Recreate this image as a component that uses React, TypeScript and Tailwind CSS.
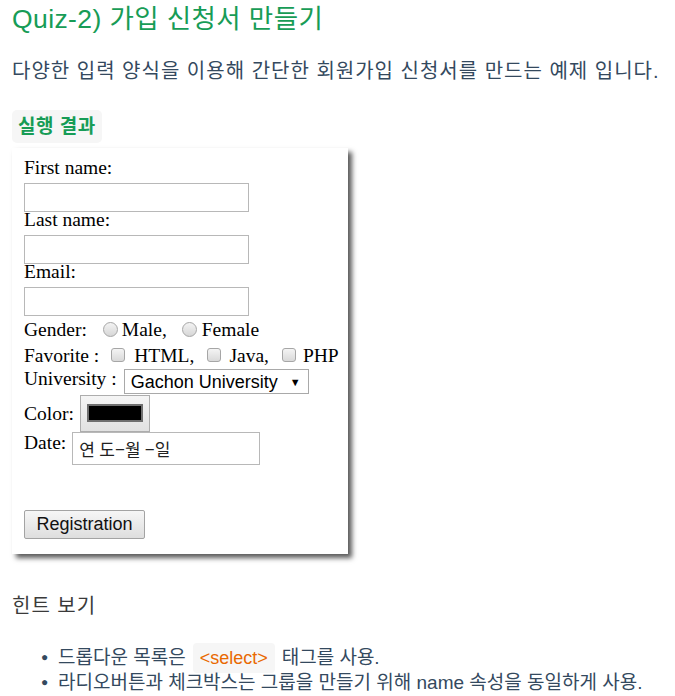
import React from "react";

const sans = { fontFamily: '"Liberation Sans", "Noto Sans CJK KR", sans-serif' };
const serif = { fontFamily: '"Liberation Serif", "Noto Sans CJK KR", serif' };

function Radio() {
  return (
    <span className="inline-block w-[15px] h-[15px] rounded-full border border-[#a6a6a6] bg-gradient-to-b from-[#f4f4f4] to-[#d6d6d6] shrink-0" />
  );
}

function Check() {
  return (
    <span className="inline-block w-[14px] h-[14px] rounded-[3px] border border-[#a6a6a6] bg-gradient-to-b from-[#f4f4f4] to-[#d9d9d9] shrink-0" />
  );
}

function TextBox() {
  return <div className="w-[225px] h-[29px] border border-[#b8b8b8] bg-white" />;
}

export default function App() {
  return (
    <div className="w-[675px] h-[696px] bg-white overflow-hidden text-[#34495e]" style={sans}>
      <div className="pl-[12px] pt-[3px]">
        <h1 className="text-[26.5px] leading-[32px] tracking-[0.4px] text-[#179c56] font-normal">Quiz-2) 가입 신청서 만들기</h1>
        <p className="mt-[22px] text-[20px] leading-[28px] tracking-[1px] whitespace-nowrap">
          다양한 입력 양식을 이용해 간단한 회원가입 신청서를 만드는 예제 입니다.
        </p>
        <div className="mt-[25px] inline-block bg-[#f6f6f6] rounded-[5px] px-[6px] h-[33px] leading-[33px] text-[19px] tracking-[0.5px] font-bold text-[#179c56]">
          실행 결과
        </div>

        <div
          className="mt-[5px] w-[336px] bg-white shadow-[4px_4px_5px_rgba(0,0,0,0.65)] pl-[12px] pt-[9px] pb-[15px] text-black text-[19.5px]"
          style={serif}
        >
          <div className="h-[26px] leading-[22px]">First name:</div>
          <TextBox />
          <div className="h-[23px] leading-[16px]">Last name:</div>
          <TextBox />
          <div className="h-[23px] leading-[16px]">Email:</div>
          <TextBox />

          <div className="h-[26px] flex items-center leading-[25px]">
            <span>Gender:</span>
            <span className="ml-[16px] flex items-center"><Radio /></span>
            <span className="ml-[4px]">Male,</span>
            <span className="ml-[15px] flex items-center"><Radio /></span>
            <span className="ml-[5px]">Female</span>
          </div>

          <div className="h-[26px] flex items-center leading-[25px]">
            <span>Favorite :</span>
            <span className="ml-[12px] flex items-center"><Check /></span>
            <span className="ml-[9px]">HTML,</span>
            <span className="ml-[13px] flex items-center"><Check /></span>
            <span className="ml-[8px]">Java,</span>
            <span className="ml-[13px] flex items-center"><Check /></span>
            <span className="ml-[7px]">PHP</span>
          </div>

          <div className="h-[26px] flex items-start leading-[22px]">
            <span>University :</span>
            <div
              className="ml-[7px] mt-[1px] w-[185px] h-[25px] border border-[#a9a9a9] bg-white flex items-center justify-between pl-[6px] pr-[7px] text-[18px] leading-[22px]"
              style={sans}
            >
              <span>Gachon University</span>
              <span className="text-[11px]">▼</span>
            </div>
          </div>

          <div className="h-[38px] flex items-center leading-[25px]">
            <span>Color:</span>
            <div className="ml-[6px] w-[70px] h-[37px] border border-[#adadad] bg-gradient-to-b from-[#f5f5f5] to-[#e1e1e1] flex items-center justify-center">
              <div className="w-[56px] h-[18px] bg-black border-2 border-[#6f6f6f]" />
            </div>
          </div>

          <div className="h-[33px] flex items-start leading-[22px]">
            <span>Date:</span>
            <div
              className="ml-[6px] w-[188px] h-[33px] border border-[#b8b8b8] bg-white flex items-center pl-[6px] text-[17px] tracking-[0.3px] text-[#222]"
              style={{ fontFamily: '"Noto Sans CJK KR", sans-serif' }}
            >
              연 도−월 −일
            </div>
          </div>

          <div className="h-[45px]" />

          <div
            className="w-[121px] h-[29px] border border-[#a3a3a3] rounded-[2px] bg-gradient-to-b from-[#f6f6f6] to-[#dedede] flex items-center justify-center text-[18px] text-[#111]"
            style={sans}
          >
            Registration
          </div>
        </div>

        <div className="mt-[40px] text-[20px] leading-[24px] tracking-[1px] text-[#3a3a3a]">힌트 보기</div>

        <ul className="mt-[27px] pl-[29px] text-[19px] leading-[25px] whitespace-nowrap">
          <li className="flex items-center h-[25px]">
            <span className="w-[17px] text-[12px]">●</span>
            <span>드롭다운 목록은</span>
            <span className="mx-[7px] bg-[#f6f6f6] rounded-[4px] px-[7px] h-[30px] leading-[30px] text-[18px] text-[#e96900]">
              &lt;select&gt;
            </span>
            <span>태그를 사용.</span>
          </li>
          <li className="flex items-center h-[25px]">
            <span className="w-[17px] text-[12px]">●</span>
            <span>라디오버튼과 체크박스는 그룹을 만들기 위해 name 속성을 동일하게 사용.</span>
          </li>
        </ul>
      </div>
    </div>
  );
}
